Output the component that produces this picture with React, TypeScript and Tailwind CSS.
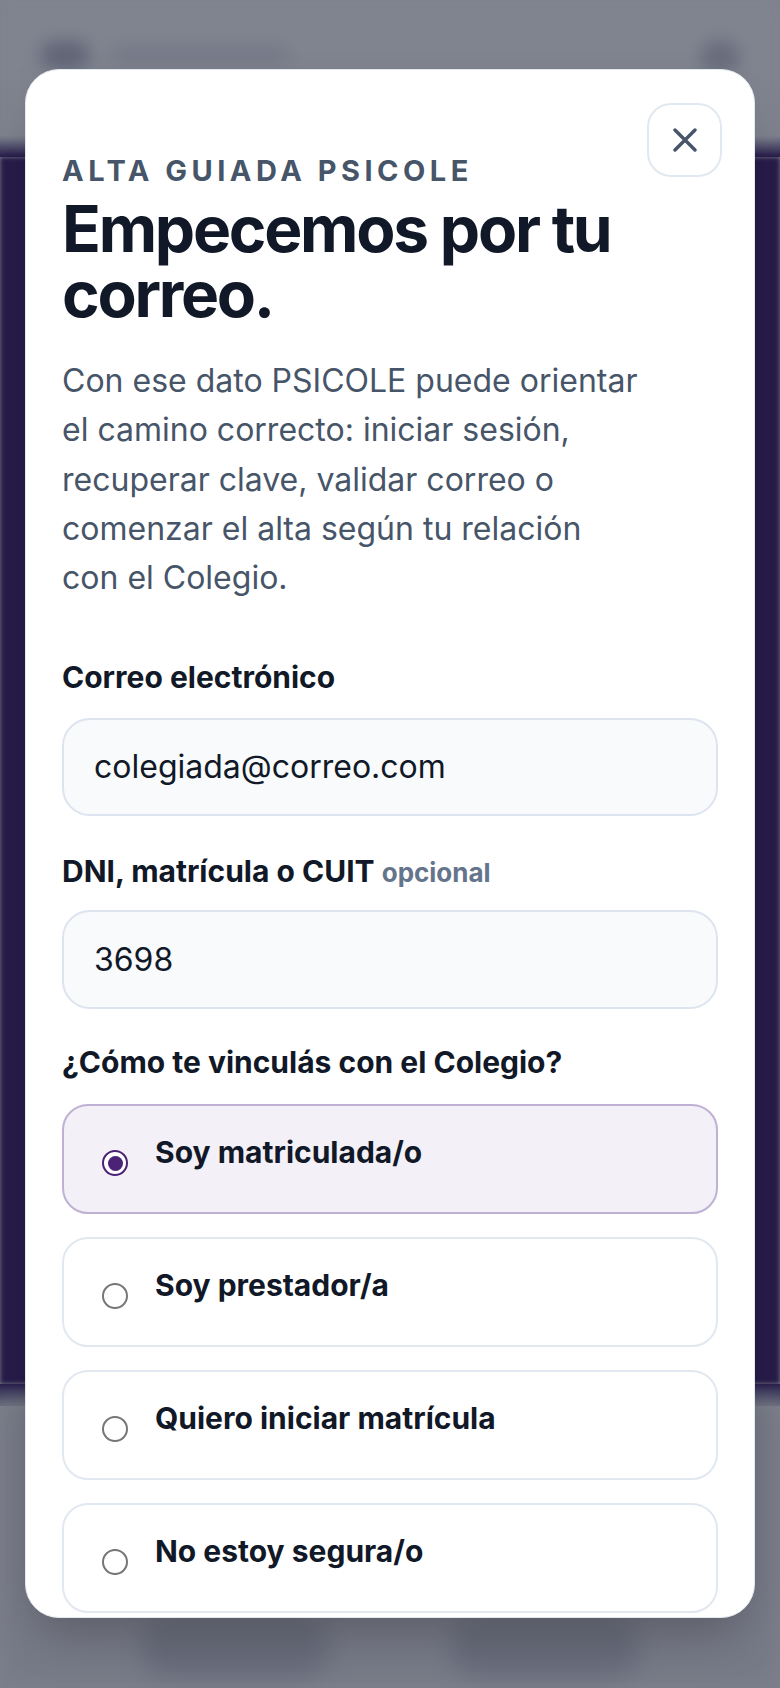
import React from "react";

const options = [
  { label: "Soy matriculada/o", selected: true },
  { label: "Soy prestador/a", selected: false },
  { label: "Quiero iniciar matrícula", selected: false },
  { label: "No estoy segura/o", selected: false },
];

function Radio({ selected }: { selected: boolean }) {
  if (selected) {
    return (
      <div className="w-[26px] h-[26px] shrink-0 rounded-full border-[2.5px] border-[#4a2376] bg-white flex items-center justify-center">
        <div className="w-[15px] h-[15px] rounded-full bg-[#4a2376]" />
      </div>
    );
  }
  return <div className="w-[26px] h-[26px] shrink-0 rounded-full border-[2px] border-[#767676] bg-white" />;
}

export default function App() {
  return (
    <div className="relative w-[780px] h-[1688px] overflow-hidden font-['Inter',sans-serif] bg-[#7e828d]">
      {/* blurred background page */}
      <div className="flex flex-col h-full">
        <div className="h-[135px] shrink-0 bg-[#80848f] flex items-start justify-between px-[40px] pt-[40px] blur-[8px]">
          <div className="flex items-center gap-[20px]">
            <div className="w-[50px] h-[30px] rounded-full bg-[#646678]" />
            <div className="w-[180px] h-[20px] rounded-full bg-[#767987]" />
          </div>
          <div className="w-[40px] h-[34px] rounded-full bg-[#6a6d7d]" />
        </div>
        <div className="h-[22px] shrink-0 bg-gradient-to-b from-[#80848f] to-[#2a1e4c]" />
        <div className="flex-1 bg-[#281c4a] blur-[2px]" />
        <div className="h-[22px] shrink-0 bg-gradient-to-b from-[#2c2250] to-[#6a6d7c]" />
        <div className="h-[282px] shrink-0 bg-[#777a87] flex items-end justify-center gap-[120px] pb-[10px] blur-[12px]">
          <div className="w-[190px] h-[60px] rounded-full bg-[#686b7a]" />
          <div className="w-[190px] h-[60px] rounded-full bg-[#686b7a]" />
        </div>
      </div>

      {/* modal */}
      <div className="absolute left-[25px] top-[69px] w-[730px] h-[1549px] rounded-[34px] bg-white border border-[#e2e8f0] overflow-hidden shadow-2xl">
        <button className="absolute right-[32px] top-[33px] w-[75px] h-[74px] rounded-[24px] border-2 border-[#e2e8f0] bg-white flex items-center justify-center">
          <svg width="24" height="24" viewBox="0 0 24 24" fill="none" stroke="#475569" strokeWidth="3.4" strokeLinecap="round">
            <path d="M2 2L22 22M22 2L2 22" />
          </svg>
        </button>

        <div className="px-[36px] pt-[83px] flex flex-col">
          <p className="text-[29px] leading-[36px] font-bold tracking-[0.155em] text-[#475569]">ALTA GUIADA PSICOLE</p>
          <h1 className="mt-[7px] text-[64px] leading-[65px] font-bold tracking-[-0.035em] text-[#111827]">
            Empecemos por tu correo.
          </h1>
          <p className="mt-[30px] max-w-[582px] text-[32px] leading-[49.3px] text-[#475569]">
            Con ese dato PSICOLE puede orientar el camino correcto: iniciar sesión, recuperar clave, validar correo o comenzar el alta según tu relación con el Colegio.
          </p>

          <div className="mt-[55px] flex flex-col">
            <label className="text-[30px] leading-[40px] font-bold text-[#111827]">Correo electrónico</label>
            <div className="mt-[21px] h-[98px] rounded-[28px] border-2 border-[#dde4ef] bg-[#f8fafc] px-[30px] flex items-center text-[32px] text-[#111827]">
              colegiada@correo.com
            </div>
          </div>

          <div className="mt-[35px] flex flex-col">
            <label className="text-[30px] leading-[40px] font-bold text-[#111827]">
              DNI, matrícula o CUIT <span className="text-[26px] font-bold text-[#64748b]">opcional</span>
            </label>
            <div className="mt-[17px] h-[99px] rounded-[28px] border-2 border-[#dde4ef] bg-[#f8fafc] px-[30px] flex items-center text-[32px] text-[#111827]">
              3698
            </div>
          </div>

          <div className="mt-[33px] flex flex-col">
            <p className="text-[30px] leading-[40px] font-bold text-[#111827]">¿Cómo te vinculás con el Colegio?</p>
            <div className="mt-[22px] flex flex-col gap-[23px]">
              {options.map((o) => (
                <div
                  key={o.label}
                  className={
                    o.selected
                      ? "h-[110px] rounded-[26px] border-2 border-[#bfb1d3] bg-[#f3f0f7] pl-[38px] pt-[25px] flex items-start gap-[27px]"
                      : "h-[110px] rounded-[26px] border-2 border-[#e2e8f0] bg-white pl-[38px] pt-[25px] flex items-start gap-[27px]"
                  }
                >
                  <div className="mt-[19px]">
                    <Radio selected={o.selected} />
                  </div>
                  <span className="text-[30px] leading-[42px] font-bold text-[#111827]">{o.label}</span>
                </div>
              ))}
            </div>
          </div>
        </div>
      </div>
    </div>
  );
}
